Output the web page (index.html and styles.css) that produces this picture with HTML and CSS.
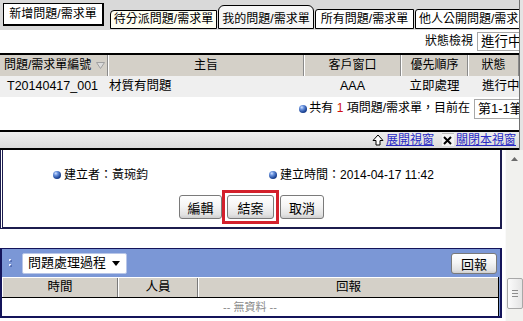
FILE: index.html
```html
<!DOCTYPE html>
<html lang="zh-Hant">
<head>
<meta charset="utf-8">
<title>我的問題/需求單</title>
<link rel="stylesheet" href="styles.css">
</head>
<body>
<div class="upper">
  <div class="main">
    <div class="tabbar">
      <div class="tab tab-new">新增問題/需求單</div>
      <div class="tab tab-pending">待分派問題/需求單</div>
      <div class="tab tab-mine">我的問題/需求單</div>
      <div class="tab tab-all">所有問題/需求單</div>
      <div class="tab tab-public">他人公開問題/需求單</div>
    </div>
    <div class="filter">
      <span class="filter-label">狀態檢視</span>
      <div class="selectbox status-box">進行中</div>
    </div>
    <div class="grid">
      <div class="grid-row grid-head">
        <div class="hc hc-id">問題/需求單編號<svg class="sort" width="9" height="7" viewBox="0 0 9 7"><polygon points="0.5,0.5 8.5,0.5 4.5,6.5" fill="#dcdcdc" stroke="#a0a0a0"/></svg></div>
        <div class="hc">主旨</div>
        <div class="hc">客戶窗口</div>
        <div class="hc">優先順序</div>
        <div class="hc">狀態</div>
      </div>
      <div class="grid-row grid-data">
        <div class="dc dc-id">T20140417_001</div>
        <div class="dc dc-subject">材質有問題</div>
        <div class="dc dc-center">AAA</div>
        <div class="dc dc-center">立即處理</div>
        <div class="dc dc-status">進行中</div>
      </div>
    </div>
    <div class="pager">
      <span class="bullet"></span>
      <span class="pager-text">共有 <span class="count">1</span> 項問題/需求單，目前在</span>
      <div class="selectbox page-box">第1-1筆</div>
    </div>
    <div class="winbar">
      <a class="winlink"><svg width="12" height="12" viewBox="0 0 12 12"><path d="M6 1 L11 6.5 H8 V11 H4 V6.5 H1 Z" fill="#fff" stroke="#000" stroke-width="1"/></svg><span class="linktext">展開視窗</span></a>
      <a class="winlink"><span class="xicon"><svg width="9" height="9" viewBox="0 0 9 9"><path d="M1 1 L8 8 M8 1 L1 8" stroke="#000" stroke-width="2"/></svg></span><span class="linktext">關閉本視窗</span></a>
    </div>
  </div>
  <div class="edge"></div>
</div>
<div class="lower">
  <div class="frame">
    <div class="detail">
      <div class="info">
        <div class="info-item"><span class="bullet"></span>建立者：黃琬鈞</div>
        <div class="info-item"><span class="bullet"></span>建立時間：2014-04-17 11:42</div>
      </div>
      <div class="actions">
        <button class="btn btn-edit">編輯</button>
        <div class="highlight"><button class="btn btn-close">結案</button></div>
        <button class="btn btn-cancel">取消</button>
      </div>
    </div>
    <div class="process">
      <div class="process-head">
        <svg class="grip" width="5" height="9" viewBox="0 0 5 9"><rect x="0" y="0" width="2" height="2" fill="#e8eeff"/><rect x="1" y="1" width="2" height="2" fill="#3e56a0" opacity="0.6"/><rect x="0" y="5" width="2" height="2" fill="#e8eeff"/><rect x="1" y="6" width="2" height="2" fill="#3e56a0" opacity="0.6"/></svg>
        <div class="proc-select"><span>問題處理過程</span><svg class="caret" width="8" height="5" viewBox="0 0 8 5"><polygon points="0,0 8,0 4,5" fill="#000"/></svg></div>
        <button class="btn btn-reply">回報</button>
      </div>
      <div class="proc-table">
        <div class="proc-headrow">
          <div class="pc">時間</div>
          <div class="pc">人員</div>
          <div class="pc">回報</div>
        </div>
        <div class="proc-empty">-- 無資料 --</div>
      </div>
    </div>
  </div>
  <div class="vscroll">
    <div class="arrow-up"><svg width="7" height="4" viewBox="0 0 7 4"><polygon points="0,4 7,4 3.5,0" fill="#6b6b6b"/></svg></div>
    <div class="thumb"><span></span><span></span><span></span></div>
  </div>
</div>
</body>
</html>
```

FILE: styles.css
```css
* { box-sizing: border-box; }
html, body { margin: 0; padding: 0; }
body {
  width: 523px;
  height: 321px;
  overflow: hidden;
  background: #fff;
  font-family: "Liberation Sans", "Noto Sans CJK TC", sans-serif;
  font-size: 12px;
  line-height: 1.2;
  color: #000;
}

/* ---------- upper frame ---------- */
.upper { display: flex; height: 150px; }
.main {
  width: 519px;
  flex: none;
  overflow: hidden;
  display: flex;
  flex-direction: column;
}
.edge {
  width: 4px;
  flex: none;
  border-left: 1px solid #707070;
  background: #e4e4e4;
}

.tabbar {
  height: 30px;
  flex: none;
  background: #d9d9d9;
  display: flex;
  align-items: flex-end;
  padding: 0 0 1px 3px;
  white-space: nowrap;
  overflow: hidden;
  font-size: 12px;
}
.tab {
  flex: none;
  display: flex;
  align-items: flex-end;
  justify-content: center;
  height: 20px;
  border: 1px solid #000;
  background: #fff;
  line-height: 16px;
  padding: 0 2px 1px;
  overflow: hidden;
}
.tab-new {
  align-self: flex-start;
  align-items: center;
  margin-top: 3px;
  width: 101px;
  height: 23px;
  border-right-width: 2px;
  border-bottom-width: 2px;
  padding-bottom: 0;
}
.tab-pending {
  margin-left: 6px;
  width: 107px;
  height: 19px;
  background: #fffff2;
  border-radius: 4px 0 0 0;
}
.tab-mine {
  margin-left: 1px;
  width: 96px;
  height: 24px;
  background: #f6f6f6;
  border-radius: 6px 6px 0 0;
}
.tab-all {
  margin-left: 1px;
  width: 99px;
  border-radius: 3px 0 0 0;
}
.tab-public {
  margin-left: 1px;
  width: 120px;
  justify-content: flex-start;
  padding-left: 3px;
  border-radius: 3px 0 0 0;
}

.filter {
  height: 23px;
  flex: none;
  display: flex;
  justify-content: flex-end;
  align-items: center;
  gap: 4px;
}
.selectbox {
  flex: none;
  background: #fff;
  border: 1px solid #a8a8a8;
  border-right: none;
  white-space: nowrap;
  overflow: hidden;
  padding-left: 3px;
}
.status-box {
  width: 42px;
  height: 19px;
  font-size: 13.5px;
  line-height: 17px;
}

.grid { flex: none; border-top: 2px solid #000; }
.grid-row {
  display: grid;
  grid-template-columns: 108px 196px 97px 67px 51px;
  height: 21px;
}
.grid-head { background: #d4d0c8; }
.hc {
  display: flex;
  align-items: center;
  justify-content: center;
  border-left: 1px solid #fff;
  border-right: 1px solid #8a8a8a;
  white-space: nowrap;
  overflow: hidden;
}
.hc-id { justify-content: flex-start; padding-left: 4px; border-left: none; }
.sort { margin-left: 5px; flex: none; }
.grid-data { background: #efefef; }
.dc {
  display: flex;
  align-items: center;
  white-space: nowrap;
  overflow: hidden;
  font-size: 12.5px;
}
.dc-id { padding-left: 7px; }
.dc-subject { padding-left: 1px; }
.dc-center { justify-content: center; }
.dc-status { padding-left: 14px; }

.pager {
  height: 23px;
  flex: none;
  display: flex;
  justify-content: flex-end;
  align-items: center;
}
.pager-text { margin-left: 2px; margin-right: 4px; white-space: nowrap; }
.count { color: #d01010; }
.page-box {
  width: 45px;
  height: 20px;
  font-size: 13px;
  line-height: 18px;
}

.bullet {
  display: inline-block;
  width: 8px;
  height: 8px;
  flex: none;
  border-radius: 50%;
  background: radial-gradient(circle at 35% 30%, #d4e2ff 0, #6d96e0 25%, #1d4597 65%, #0b2358 100%);
}

.winbar {
  margin-top: auto;
  height: 20px;
  flex: none;
  border-top: 2px solid #000;
  border-bottom: 2px solid #000;
  background: linear-gradient(#eeeeee, #dadada);
  display: flex;
  justify-content: flex-end;
  align-items: center;
  gap: 8px;
  padding-right: 3px;
}
.winlink {
  display: flex;
  align-items: center;
  gap: 2px;
  color: #2929c4;
  white-space: nowrap;
}
.linktext { text-decoration: underline; }
.xicon {
  display: flex;
  align-items: center;
  justify-content: center;
  width: 12px;
  height: 13px;
  background: #f4f4f4;
  border-top: 1px solid #bdbdbd;
}

/* ---------- lower frame ---------- */
.lower { display: flex; height: 171px; }
.frame { width: 502px; flex: none; }

.detail {
  height: 79px;
  border-left: 3px double #1c1c4e;
  border-right: 2px solid #1c1c4e;
  border-bottom: 2px solid #1c1c4e;
  padding-top: 17px;
}
.info {
  display: grid;
  grid-template-columns: 216px 1fr;
  padding-left: 50px;
  height: 16px;
  line-height: 16px;
}
.info-item {
  display: flex;
  align-items: center;
  gap: 3px;
  white-space: nowrap;
}
.actions {
  margin-top: 7px;
  height: 34px;
  display: flex;
  justify-content: center;
  align-items: center;
}
.btn {
  font-family: inherit;
  font-size: 13px;
  color: #000;
  height: 24px;
  padding: 0;
  border: 1px solid #7a7a7a;
  border-radius: 3px;
  background: linear-gradient(#ffffff, #f5f5f5 45%, #e2e2e2 85%, #cfcfcf);
}
.btn-edit { width: 43px; }
.highlight {
  display: flex;
  border: 3px solid #d3202c;
  padding: 2px;
}
.btn-close { width: 47px; }
.btn-cancel { width: 44px; margin-left: 1px; }

.process {
  margin-top: 19px;
  border: 2px solid #14145a;
  border-top-width: 1px;
  background: #7b97d6;
}
.process-head {
  height: 28px;
  display: flex;
  align-items: center;
  padding-left: 7px;
}
.grip { flex: none; }
.proc-select {
  margin-left: 8px;
  width: 105px;
  height: 21px;
  background: #fff;
  border: 1px solid #b8c6e8;
  border-radius: 2px;
  display: flex;
  align-items: center;
  justify-content: space-between;
  padding: 0 6px 0 5px;
  font-size: 13px;
}
.btn-reply {
  margin-left: auto;
  margin-right: 3px;
  width: 46px;
  height: 21px;
}
.proc-table {
  margin-right: 1px;
  background: #fff;
  border-right: 1px solid #000;
}
.proc-headrow {
  display: grid;
  grid-template-columns: 116px 80px 1fr;
  height: 21px;
  background: #d4d0c8;
  border-top: 1px solid #fff;
  border-bottom: 1px solid #000;
}
.pc {
  display: flex;
  align-items: center;
  justify-content: center;
  border-left: 1px solid #fff;
  border-right: 1px solid #7a7a7a;
  font-size: 12.5px;
}
.pc:last-child { border-right: none; }
.proc-empty {
  height: 18px;
  line-height: 18px;
  text-align: center;
  color: #8a8a8a;
  font-size: 11px;
}

.vscroll {
  width: 18px;
  flex: none;
  margin-left: 3px;
  background: #f1f1ee;
  border-left: 1px solid #fafafa;
  display: flex;
  flex-direction: column;
  align-items: center;
}
.arrow-up {
  width: 17px;
  height: 17px;
  display: flex;
  align-items: center;
  justify-content: center;
}
.thumb {
  margin-top: 111px;
  width: 16px;
  height: 31px;
  border: 1px solid #a8a8a8;
  border-radius: 2px;
  background: linear-gradient(90deg, #fbfbfb, #e4e4e4);
  display: flex;
  flex-direction: column;
  align-items: center;
  justify-content: center;
  gap: 2px;
}
.thumb span {
  display: block;
  width: 6px;
  height: 1px;
  background: #8c8c8c;
}
```
